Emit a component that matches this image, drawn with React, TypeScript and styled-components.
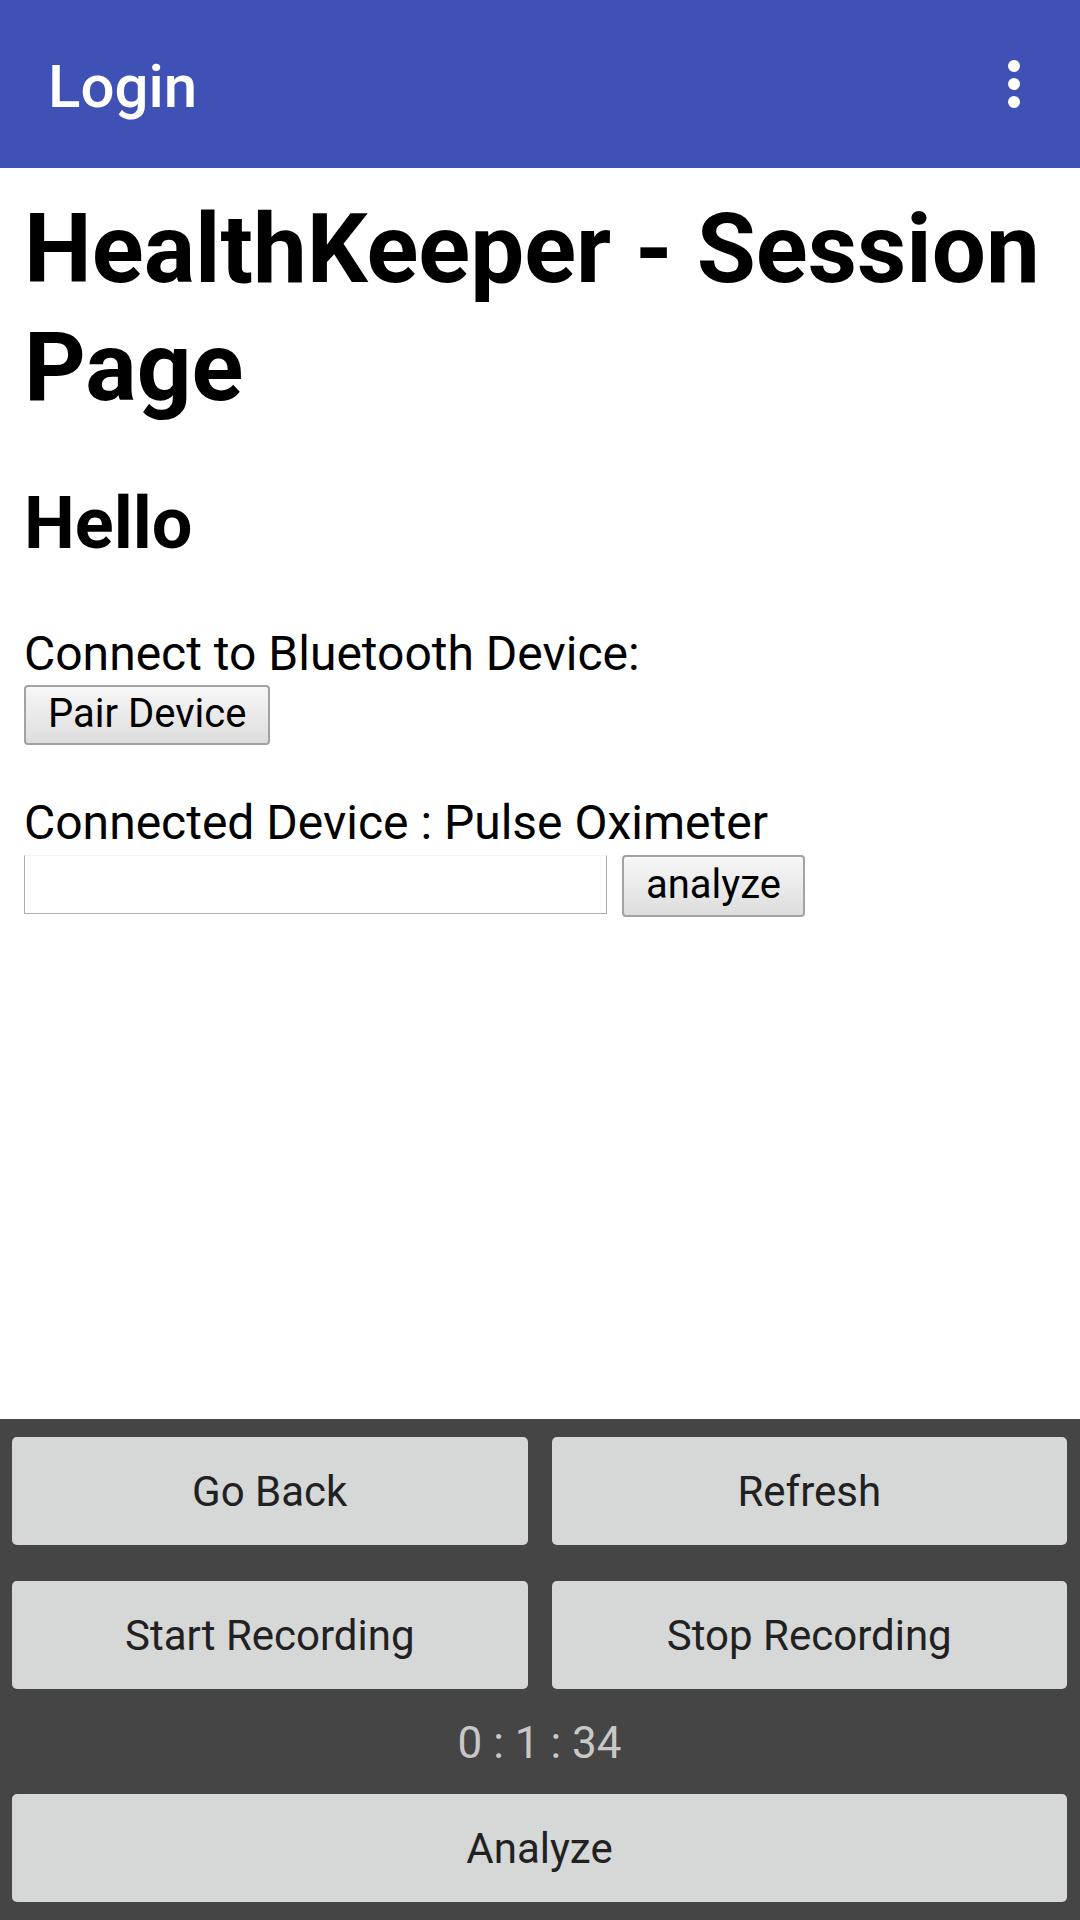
import React from "react";
import styled, { createGlobalStyle } from "styled-components";

const GlobalStyle = createGlobalStyle`
  html, body {
    margin: 0;
    padding: 0;
    background: #ffffff;
  }
  body {
    font-family: Roboto, "Noto Sans", "Liberation Sans", sans-serif;
    color: #000;
  }
  * { box-sizing: border-box; }
`;

const Screen = styled.div`
  width: 1080px;
  height: 1920px;
  display: flex;
  flex-direction: column;
  overflow: hidden;
  background: #ffffff;
`;

const AppBar = styled.header`
  height: 168px;
  flex: 0 0 168px;
  background: #3f51b5;
  display: flex;
  align-items: center;
  justify-content: space-between;
  padding: 6px 30px 0 48px;
`;

const AppTitle = styled.div`
  color: #ffffff;
  font-family: Roboto, sans-serif;
  font-weight: 500;
  font-size: 60px;
  line-height: 70px;
`;

const MenuButton = styled.div`
  width: 72px;
  height: 72px;
  margin-top: -6px;
  display: flex;
  align-items: center;
  justify-content: center;
`;

const Content = styled.main`
  flex: 1 1 auto;
  padding: 0 24px;
  display: flex;
  flex-direction: column;
  align-items: flex-start;
`;

const Title = styled.h1`
  margin: 22px 0 0;
  font-size: 96px;
  line-height: 118px;
  font-weight: 700;
`;

const Greeting = styled.h2`
  margin: 56px 0 0;
  font-size: 72px;
  line-height: 84px;
  font-weight: 700;
`;

const Label = styled.div<{ $gap: number }>`
  margin-top: ${(p) => p.$gap}px;
  font-size: 48px;
  line-height: 56px;
  flex-shrink: 0;
`;

const WebButton = styled.button<{ $h?: number }>`
  height: ${(p) => p.$h ?? 60}px;
  margin: 0;
  padding: 0 22px 4px;
  font-family: Roboto, sans-serif;
  font-size: 40px;
  color: #000;
  background: linear-gradient(#f7f7f7, #dddddd);
  border: 2px solid #a2a2a2;
  border-radius: 4px;
  display: flex;
  align-items: center;
  justify-content: center;
`;

const PairButton = styled(WebButton)`
  margin-top: 3px;
`;

const InputRow = styled.div`
  margin-top: 4px;
  display: flex;
  align-items: flex-start;
  gap: 15px;
`;

const TextInput = styled.input`
  width: 583px;
  height: 59px;
  margin: 0;
  border: 1px solid #ababab;
  border-top-color: #f4f4f4;
  background: #fff;
  padding: 0 8px;
  font-size: 40px;
  font-family: Roboto, sans-serif;
  outline: none;
`;

const BottomPanel = styled.section`
  flex: 0 0 auto;
  background: #454545;
  padding: 18px 13px 18px 12px;
  display: flex;
  flex-direction: column;
`;

const ButtonGrid = styled.div`
  display: grid;
  grid-template-columns: 1fr 1fr;
  column-gap: 24px;
  row-gap: 36px;
`;

const PanelButton = styled.button`
  height: 108px;
  border: none;
  border-radius: 5px;
  background: #d6d7d7;
  color: #212121;
  font-family: Roboto, sans-serif;
  font-size: 42px;
  font-weight: 400;
  display: flex;
  align-items: center;
  justify-content: center;
  padding: 0;
`;

const Timer = styled.div`
  height: 105px;
  display: flex;
  align-items: center;
  justify-content: center;
  padding-top: 2px;
  color: #c8c8c8;
  font-size: 44px;
  line-height: 52px;
`;

const DotsIcon = () => (
  <svg width="72" height="72" viewBox="0 0 72 72" aria-hidden="true">
    <circle cx="36" cy="18" r="6" fill="#ffffff" />
    <circle cx="36" cy="36" r="6" fill="#ffffff" />
    <circle cx="36" cy="54" r="6" fill="#ffffff" />
  </svg>
);

export default function App() {
  return (
    <>
      <GlobalStyle />
      <Screen>
        <AppBar>
          <AppTitle>Login</AppTitle>
          <MenuButton>
            <DotsIcon />
          </MenuButton>
        </AppBar>
        <Content>
          <Title>HealthKeeper - Session Page</Title>
          <Greeting>Hello</Greeting>
          <Label $gap={60}>Connect to Bluetooth Device:</Label>
          <PairButton>Pair Device</PairButton>
          <Label $gap={50}>Connected Device : Pulse Oximeter</Label>
          <InputRow>
            <TextInput type="text" />
            <WebButton $h={62}>analyze</WebButton>
          </InputRow>
        </Content>
        <BottomPanel>
          <ButtonGrid>
            <PanelButton>Go Back</PanelButton>
            <PanelButton>Refresh</PanelButton>
            <PanelButton>Start Recording</PanelButton>
            <PanelButton>Stop Recording</PanelButton>
          </ButtonGrid>
          <Timer>0 : 1 : 34</Timer>
          <PanelButton>Analyze</PanelButton>
        </BottomPanel>
      </Screen>
    </>
  );
}
